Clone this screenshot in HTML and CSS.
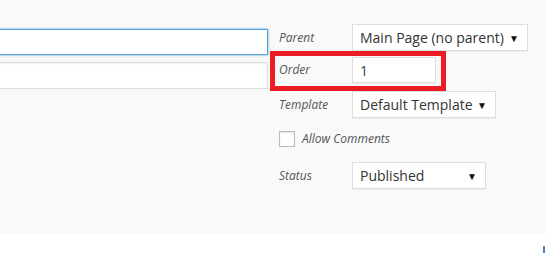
FILE: index.html
```html
<!doctype html>
<html>
  <head>
    <title>Page Attributes</title>
    <link rel="stylesheet" href="styles.css">
  </head>
  <body>
    <div class="panel">
      <div class="main">
        <input type="text" class="field focused" />
        <input type="text" class="field" />
      </div>

      <div class="sidebar">
        <div class="row row-parent">
          <span class="label">Parent</span>
          <div class="select select-parent">
            <span>Main Page (no parent)</span>
            <span class="arrow">&#9660;</span>
          </div>
        </div>
        <div class="row row-order">
          <span class="label">Order</span>
          <div class="order-input">1</div>
        </div>
        <div class="row row-template">
          <span class="label">Template</span>
          <div class="select select-template">
            <span>Default Template</span>
            <span class="arrow">&#9660;</span>
          </div>
        </div>
        <div class="row row-check">
          <span class="checkbox"></span>
          <span class="label">Allow Comments</span>
        </div>
        <div class="row row-status">
          <span class="label">Status</span>
          <div class="select select-status">
            <span>Published</span>
            <span class="arrow">&#9660;</span>
          </div>
        </div>

        <div class="highlight"></div>
      </div>
    </div>
    <div class="footer">
      <span class="edge-mark"></span>
    </div>
  </body>
</html>
```

FILE: styles.css
```css
body {
  margin: 0;
  background: #fff;
  font-family: "Open Sans", "Liberation Sans", sans-serif;
  overflow: hidden;
}
.panel {
  display: flex;
  height: 234px;
  box-sizing: border-box;
  padding-top: 24px;
  background: #f9f9f9;
}
.main {
  display: flex;
  flex-direction: column;
  gap: 7px;
  width: 278px;
  margin-left: -10px;
  margin-top: 5px;
}
.field {
  box-sizing: border-box;
  width: 278px;
  height: 27px;
  margin: 0;
  padding: 3px 6px;
  background: #fff;
  border: 1px solid #ddd;
  box-shadow: inset 0 1px 2px rgba(0, 0, 0, 0.07);
  outline: none;
}
.field.focused {
  height: 26px;
  border-color: #5b9dd9;
  box-shadow: 0 0 2px rgba(30, 140, 190, 0.8);
}
.sidebar {
  position: relative;
  margin-left: 11px;
}
.row {
  display: flex;
  align-items: center;
}
.label {
  width: 73px;
  font-size: 12px;
  line-height: 16px;
  font-style: italic;
  color: #555;
}
.select,
.order-input {
  display: flex;
  align-items: center;
  justify-content: space-between;
  box-sizing: border-box;
  height: 27px;
  padding: 0 8px 0 7px;
  background: #fff;
  border: 1px solid #ddd;
  box-shadow: 0 1px 1px rgba(0, 0, 0, 0.04);
  font-size: 14px;
  color: #333;
}
.arrow {
  font-size: 10px;
  color: #111;
}
.select-parent {
  width: 176px;
}
.row-order {
  margin-top: 6px;
}
.order-input {
  width: 84px;
  height: 26px;
  color: #2e4453;
}
.row-template {
  margin-top: 8px;
}
.select-template {
  width: 144px;
}
.row-check {
  margin-top: 13px;
}
.checkbox {
  box-sizing: border-box;
  width: 16px;
  height: 16px;
  margin-right: 7px;
  background: #fff;
  border: 1px solid #bbb;
  box-shadow: inset 0 1px 2px rgba(0, 0, 0, 0.1);
}
.row-check .label {
  width: auto;
}
.row-status {
  margin-top: 15px;
}
.select-status {
  width: 134px;
}
.highlight {
  position: absolute;
  left: -9px;
  top: 27px;
  width: 176px;
  height: 40px;
  box-sizing: border-box;
  border: 5px solid #ed1c24;
}
.footer {
  display: flex;
  justify-content: flex-end;
  height: 21px;
}
.edge-mark {
  width: 2px;
  height: 7px;
  margin-top: 12px;
  background: #4a7fc0;
}
```
